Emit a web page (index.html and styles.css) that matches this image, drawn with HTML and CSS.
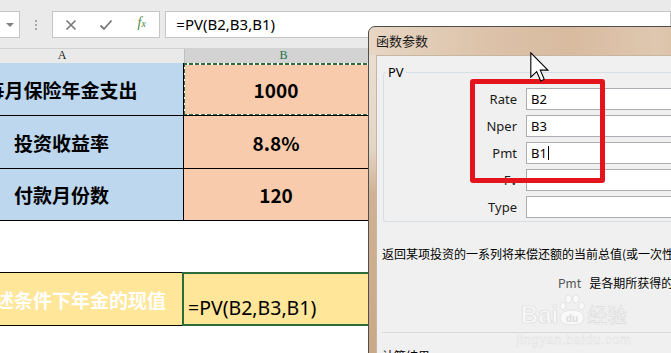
FILE: index.html
```html
<!DOCTYPE html>
<html lang="zh-CN">
<head>
<meta charset="utf-8">
<title>PV</title>
<link rel="stylesheet" href="styles.css">
</head>
<body>
<div class="app">
  <div class="toolbar">
    <div class="namebox"><span class="dd"></span></div>
    <div class="grip"><i></i><i></i><i></i></div>
    <div class="btns">
      <span class="slot"><svg width="12" height="12" viewBox="0 0 12 12"><path d="M1.5 1.5 L10.5 10.5 M10.5 1.5 L1.5 10.5" stroke="#767676" stroke-width="1.6" fill="none"/></svg></span>
      <span class="slot"><svg width="14" height="12" viewBox="0 0 14 12"><path d="M1.5 6.5 L5 10 L12.5 1.5" stroke="#767676" stroke-width="1.8" fill="none"/></svg></span>
      <span class="slot fx">f<sub>x</sub></span>
    </div>
    <div class="formula">=PV(B2,B3,B1)</div>
  </div>

  <div class="headers">
    <div class="hcell">A</div>
    <div class="hcell sel">B</div>
  </div>

  <div class="sheet">
    <div class="cell ca blue bd">每月保险年金支出</div>
    <div class="cell cb orange bd copy">1000<span class="ants"></span></div>
    <div class="cell ca blue bd">投资收益率</div>
    <div class="cell cb orange bd">8.8%</div>
    <div class="cell ca blue bd">付款月份数</div>
    <div class="cell cb orange bd">120</div>
    <div class="cell ca empty"></div>
    <div class="cell cb empty"></div>
    <div class="cell ca yellow bd white">在上述条件下年金的现值</div>
    <div class="cell cb yellow bd active">=PV(B2,B3,B1)</div>
  </div>

  <div class="dialog">
    <div class="dlg-title">函数参数</div>
    <div class="dlg-body">
      <div class="group">
        <span class="glabel">PV</span>
        <div class="fields">
          <label>Rate</label><div class="inp">B2</div>
          <label>Nper</label><div class="inp">B3</div>
          <label>Pmt</label><div class="inp">B1<span class="caret"></span></div>
          <label>Fv</label><div class="inp"></div>
          <label>Type</label><div class="inp"></div>
        </div>
      </div>
      <p class="desc">返回某项投资的一系列将来偿还额的当前总值(或一次性偿还额的现值)</p>
      <p class="pmt"><span class="pname">Pmt</span>是各期所获得的金额，在整个投资期内不变</p>
      <div class="sep"></div>
      <p class="result">计算结果 =</p>
      <div class="wm">
        <div class="wm-top">
          <span class="wm-bai">Bai</span>
          <svg class="paw" width="28" height="32" viewBox="0 0 28 32">
            <g fill="#f9f9f9" stroke="#dedede" stroke-width="0.8">
              <ellipse cx="5" cy="12" rx="3" ry="3.6"/>
              <ellipse cx="10.5" cy="5" rx="3.2" ry="4"/>
              <ellipse cx="18" cy="5" rx="3.2" ry="4"/>
              <ellipse cx="23.5" cy="12" rx="3" ry="3.6"/>
              <path d="M2 24 Q3 16 14 16 Q25 16 26 24 Q26 31 14 31 Q2 31 2 24 Z"/>
            </g>
            <text x="14" y="28" text-anchor="middle" class="wm-du">du</text>
          </svg>
          <span class="wm-jy">经验</span>
        </div>
        <div class="wm-url">jingyan.baidu.com</div>
      </div>
    </div>
  </div>

  <div class="redbox"></div>

  <svg class="cursor" width="19" height="30" viewBox="0 0 12 19">
    <path d="M0.5 0.5 L0.5 16 L4.2 12.4 L6.8 18.3 L9 17.3 L6.5 11.5 L11.3 11.5 Z" fill="#ffffff" stroke="#000000" stroke-width="0.7" stroke-linejoin="miter"/>
  </svg>
</div>
</body>
</html>
```

FILE: styles.css
```css
* { box-sizing: border-box; }

html, body {
  margin: 0;
  padding: 0;
}

body {
  width: 671px;
  height: 353px;
  overflow: hidden;
  background: #ffffff;
  font-family: "Noto Sans", "Noto Sans CJK SC", sans-serif;
}

.app {
  position: relative;
  width: 671px;
  height: 353px;
  overflow: hidden;
}

/* ---------- toolbar / formula bar ---------- */
.toolbar {
  height: 49px;
  background: #eaeaea;
  border-bottom: 1px solid #d2d2d2;
  padding-top: 11px;
  display: flex;
  align-items: flex-start;
}

.namebox {
  margin-left: -40px;
  width: 62px;
  height: 27px;
  background: #ffffff;
  border: 1px solid #c6c6c6;
  display: flex;
  align-items: center;
  justify-content: flex-end;
  padding-right: 5px;
}

.dd {
  width: 0;
  height: 0;
  border-left: 4px solid transparent;
  border-right: 4px solid transparent;
  border-top: 4px solid #808080;
}

.grip {
  margin-left: 14px;
  width: 4px;
  height: 27px;
  display: flex;
  flex-direction: column;
  align-items: center;
  justify-content: center;
  gap: 2px;
}

.grip i {
  display: block;
  width: 2px;
  height: 2px;
  background: #a8a8a8;
}

.btns {
  margin-left: 14px;
  width: 108px;
  height: 27px;
  background: #ffffff;
  border: 1px solid #c6c6c6;
  display: flex;
  align-items: center;
}

.slot {
  width: 36px;
  height: 25px;
  display: flex;
  align-items: center;
  justify-content: center;
}

.fx {
  font-family: "Liberation Serif", serif;
  font-style: italic;
  font-size: 14px;
  color: #4a8a3a;
  padding-bottom: 3px;
}

.fx sub {
  font-size: 10px;
  vertical-align: -2px;
}

.formula {
  margin-left: 5px;
  width: 520px;
  height: 27px;
  background: #ffffff;
  border: 1px solid #c6c6c6;
  padding-left: 10px;
  font-family: "Noto Sans", "Noto Sans CJK SC", sans-serif;
  font-size: 15px;
  line-height: 24px;
  color: #000000;
}

/* ---------- column headers ---------- */
.headers {
  display: grid;
  grid-template-columns: 244px 198px;
  margin-left: -60px;
  height: 14px;
  background: #e9e9e9;
}

.hcell {
  font-family: "Liberation Serif", serif;
  font-size: 12px;
  line-height: 13px;
  text-align: center;
  color: #222222;
}

.hcell.sel {
  background: #d3d3d3;
  color: #217346;
  border-left: 1px solid #bdbdbd;
}

/* ---------- sheet ---------- */
.sheet {
  display: grid;
  grid-template-columns: 244px 198px;
  grid-template-rows: 53px 53px 52px 52px 53px;
  margin-left: -60px;
}

.cell {
  display: flex;
  align-items: center;
  justify-content: center;
  font-family: "Noto Sans CJK SC", "Noto Sans", sans-serif;
  font-weight: 700;
  font-size: 19px;
  color: #000000;
  white-space: nowrap;
  overflow: hidden;
}

.cell.bd { border-bottom: 1px solid #000000; }
.cell.ca.bd { border-right: 1px solid #000000; }
.cell.empty { border-bottom: 1px solid #000000; }

.blue { background: #bdd7ee; }
.orange { background: #f8cbad; }
.yellow { background: #ffe699; }
.white { color: #ffffff; }

.cb { padding-right: 14px; }

.copy {
  position: relative;
}

.copy::before {
  content: "";
  position: absolute;
  left: 0;
  right: 0;
  top: -1px;
  height: 1px;
  background: #217346;
}

/* marching ants around the copied cell */
.ants {
  position: absolute;
  left: -1px;
  top: 0;
  right: 0;
  bottom: -1px;
  background:
    repeating-linear-gradient(90deg, #2f6b3b 0 4px, #ffffff 4px 6px) top left / 100% 2px no-repeat,
    repeating-linear-gradient(90deg, #2f6b3b 0 4px, #ffffff 4px 6px) bottom left / 100% 2px no-repeat,
    repeating-linear-gradient(180deg, #2f6b3b 0 4px, #ffffff 4px 6px) top left / 2px 100% no-repeat,
    repeating-linear-gradient(180deg, #2f6b3b 0 4px, #ffffff 4px 6px) top right / 2px 100% no-repeat;
}

.active {
  position: relative;
  justify-content: flex-start;
  align-items: flex-end;
  padding: 0 0 4px 4px;
  font-weight: 400;
  font-size: 19.5px;
  font-family: "Noto Sans", "Noto Sans CJK SC", sans-serif;
  overflow: visible;
}

.active::after {
  content: "";
  position: absolute;
  left: -2px;
  top: -1px;
  right: -1px;
  bottom: -1px;
  border: 2px solid #2e6b3a;
}

/* ---------- dialog ---------- */
.dialog {
  position: absolute;
  left: 368px;
  top: 26px;
  width: 340px;
  height: 340px;
  border: 1px solid #4e4e4e;
  border-radius: 7px 0 0 0;
  background:
    linear-gradient(90deg, #e8d6c4 0%, #dcc2a9 35%, #d8bb9f 60%, #dfc7b0 85%, #d6b99d 100%);
  padding-left: 7px;
}

.dialog::before {
  content: "";
  position: absolute;
  left: 0;
  top: 28px;
  width: 7px;
  bottom: 0;
  background: linear-gradient(180deg, #e9ded0 0%, #e4d6c5 30%, #cfb193 45%, #c9a887 100%);
}

.dlg-title {
  height: 28px;
  font-family: "Noto Sans CJK SC", sans-serif;
  font-size: 13px;
  line-height: 28px;
  color: #1a1a1a;
}

.dlg-body {
  position: relative;
  height: 320px;
  background: #f0f0f0;
  border: 1px solid #c7b6a2;
  border-right: none;
  padding: 16px 0 0 6px;
}

.group {
  position: relative;
  height: 150px;
  border: 1px solid #d5dfe5;
  border-right: none;
  border-radius: 3px 0 0 3px;
  padding-top: 15px;
}

.glabel {
  position: absolute;
  left: 2px;
  top: -10px;
  padding: 0 2px;
  background: #f0f0f0;
  font-size: 13px;
  line-height: 18px;
  color: #000;
}

.fields {
  display: grid;
  grid-template-columns: 133px 1fr;
  grid-auto-rows: 22px;
  row-gap: 5px;
  column-gap: 9px;
}

.fields label {
  text-align: right;
  font-size: 13px;
  line-height: 22px;
  color: #1a1a1a;
}

.inp {
  height: 22px;
  background: #ffffff;
  border: 1px solid #abadb3;
  border-right: none;
  padding-left: 4px;
  font-size: 13px;
  line-height: 20px;
  color: #000;
}

.caret {
  display: inline-block;
  width: 1px;
  height: 14px;
  background: #000;
  vertical-align: -2px;
  margin-left: 1px;
}

.desc {
  margin: 24px 0 0 -1px;
  font-family: "Noto Sans CJK SC", sans-serif;
  font-size: 12px;
  line-height: 16px;
  white-space: nowrap;
  color: #000;
}

.pmt {
  margin: 13px 0 0 175px;
  font-family: "Noto Sans CJK SC", sans-serif;
  font-size: 12px;
  line-height: 16px;
  white-space: nowrap;
  color: #000;
}

.pname {
  color: #555;
  margin-right: 8px;
}

.sep {
  margin: 41px 0 0 -1px;
  height: 1px;
  background: #d8d8d8;
}

.result {
  margin: 15px 0 0 -1px;
  font-family: "Noto Sans CJK SC", sans-serif;
  font-size: 12px;
  line-height: 16px;
  color: #000;
}

/* watermark */
.wm {
  position: absolute;
  left: 136px;
  top: 238px;
  display: flex;
  flex-direction: column;
  align-items: center;
  width: 122px;
  pointer-events: none;
}

.wm-top {
  display: flex;
  align-items: flex-end;
  gap: 0;
  height: 32px;
}

.wm-bai {
  font-family: "Liberation Sans", sans-serif;
  font-weight: 700;
  font-size: 24px;
  line-height: 22px;
  color: #f8f8f8;
  -webkit-text-stroke: 0.6px #dadada;
}

.wm-du {
  font-family: "Liberation Sans", sans-serif;
  font-weight: 700;
  font-size: 10px;
  fill: #dcdcdc;
}

.wm-jy {
  font-family: "Noto Sans CJK SC", sans-serif;
  font-size: 20px;
  line-height: 22px;
  color: #f8f8f8;
  -webkit-text-stroke: 0.6px #dadada;
  margin-left: 1px;
}

.wm-url {
  margin-top: 8px;
  font-family: "Liberation Sans", sans-serif;
  font-size: 13px;
  line-height: 12px;
  letter-spacing: 0.6px;
  color: #f8f8f8;
  -webkit-text-stroke: 0.4px #dcdcdc;
}

/* red highlight */
.redbox {
  position: absolute;
  left: 470px;
  top: 79px;
  width: 135px;
  height: 104px;
  border: 5px solid #e3141b;
  border-radius: 3px;
}

.cursor {
  position: absolute;
  left: 530px;
  top: 52px;
}
```
